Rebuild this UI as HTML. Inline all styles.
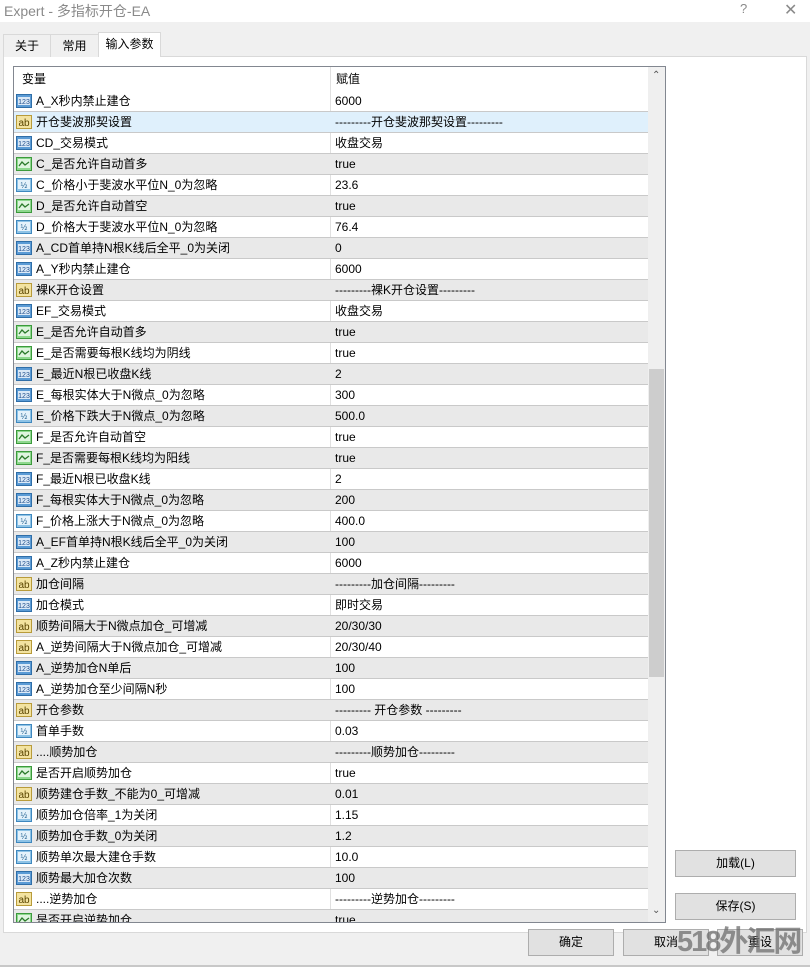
<!DOCTYPE html>
<html><head><meta charset="utf-8"><style>
*{margin:0;padding:0;box-sizing:border-box}
html,body{width:810px;height:967px;overflow:hidden}
body{background:#f0f0f0;font-family:"Liberation Sans","Noto Sans CJK SC",sans-serif;font-size:12px;color:#000;position:relative}
.abs{position:absolute}
.title{left:0;top:0;width:810px;height:22px;background:#fff}
.title span{position:absolute;left:4px;top:1px;font-size:14px;color:#8a8a8a}
.tab{position:absolute;top:34px;height:23px;border:1px solid #d9d9d9;border-bottom:none;background:#f0f0f0;text-align:center;line-height:22px}
.panel{left:3px;top:56px;width:804px;height:877px;background:#fff;border:1px solid #d9d9d9}
.list{left:13px;top:66px;width:653px;height:857px;border:1px solid #828790;background:#fff;overflow:hidden}
.hdr{position:absolute;left:0;top:0;width:634px;height:24px;background:#fff}
.hdr span{position:absolute;top:0;line-height:24px}
.row{position:absolute;left:0;width:634px;height:21px;border-bottom:1px solid #c9c9c9}
.row .n{position:absolute;left:22px;top:0;line-height:20px;white-space:nowrap}
.row .v{position:absolute;left:321px;top:0;line-height:20px;white-space:nowrap}
.row svg{position:absolute;left:2px;top:2px}
.g{background:#e9e9e9}.s{background:#dff0fc}
.col{position:absolute;left:316px;top:0;width:1px;height:857px;background:#e0e0e0}
.sb{position:absolute;left:634px;top:0;width:17px;height:855px;background:#efefef}
.thumb{position:absolute;left:1px;top:302px;width:15px;height:308px;background:#cdcdcd}
.btn{position:absolute;height:27px;border:1px solid #adadad;background:#e1e1e1;text-align:center;line-height:25px;font-size:12px}
</style></head><body>
<div class="abs title"><span>Expert - 多指标开仓-EA</span><span style="left:740px;font-size:13px">?</span><span style="left:784px;font-size:16px;top:0">✕</span></div>
<div class="abs panel"></div>
<div class="tab" style="left:3px;width:48px">关于</div>
<div class="tab" style="left:50px;width:49px">常用</div>
<div class="tab" style="left:98px;width:63px;top:32px;height:25px;background:#fff">输入参数</div>
<div class="abs list">
<div class="hdr"><span style="left:8px">变量</span><span style="left:322px">赋值</span></div>
<div class="col"></div>
<div id="rows"></div>
<div class="sb"><div style="position:absolute;left:4px;top:3px;font-size:10px;color:#555">&#8963;</div><div class="thumb"></div><div style="position:absolute;left:4px;top:838px;font-size:10px;color:#555">&#8964;</div></div>
</div>
<div class="btn" style="left:675px;top:850px;width:121px">加载(L)</div>
<div class="btn" style="left:675px;top:893px;width:121px">保存(S)</div>
<div class="btn" style="left:528px;top:929px;width:86px">确定</div>
<div class="btn" style="left:623px;top:929px;width:86px">取消</div>
<div class="btn" style="left:717px;top:929px;width:86px">重设</div>
<div class="abs" style="left:677px;top:922px;font-size:29px;line-height:40px;font-weight:bold;color:rgba(110,110,110,.75);letter-spacing:-2px;white-space:nowrap">518外汇网</div>
<div class="abs" style="left:0;top:965px;width:810px;height:2px;background:#c8c8c8"></div>
<script>
var I={
n:'<svg width="17" height="16"><rect x="0.5" y="1.5" width="15" height="13" fill="#5b9bd5" stroke="#2f6ea8"/><rect x="2" y="4" width="12" height="8" fill="#dbe9f7"/><text x="8" y="11" font-size="7" text-anchor="middle" fill="#1f4e8c" font-family="Liberation Sans">123</text></svg>',
a:'<svg width="17" height="16"><rect x="0.5" y="1.5" width="15" height="13" fill="#f3e3a0" stroke="#b89b3a"/><text x="8" y="12" font-size="10" text-anchor="middle" fill="#5a4500" font-family="Liberation Sans">ab</text></svg>',
c:'<svg width="17" height="16"><rect x="0.5" y="1.5" width="15" height="13" fill="#8ed88e" stroke="#3c9a3c"/><rect x="2" y="3" width="12" height="9" fill="#dff5df"/><path d="M3 10l3-4 3 3 4-3" stroke="#2a7a2a" fill="none" stroke-width="1.3"/></svg>',
v:'<svg width="17" height="16"><rect x="0.5" y="1.5" width="15" height="13" fill="#8ec3e6" stroke="#3f88bf"/><rect x="2" y="3" width="12" height="9" fill="#e5f2fb"/><text x="8" y="11" font-size="8" text-anchor="middle" fill="#1f5f8f" font-family="Liberation Sans">½</text></svg>'};
var D=[
['n','A_X秒内禁止建仓','6000'],['a','开仓斐波那契设置','---------开仓斐波那契设置---------'],['n','CD_交易模式','收盘交易'],['c','C_是否允许自动首多','true'],['v','C_价格小于斐波水平位N_0为忽略','23.6'],['c','D_是否允许自动首空','true'],['v','D_价格大于斐波水平位N_0为忽略','76.4'],['n','A_CD首单持N根K线后全平_0为关闭','0'],['n','A_Y秒内禁止建仓','6000'],['a','裸K开仓设置','---------裸K开仓设置---------'],['n','EF_交易模式','收盘交易'],['c','E_是否允许自动首多','true'],['c','E_是否需要每根K线均为阴线','true'],['n','E_最近N根已收盘K线','2'],['n','E_每根实体大于N微点_0为忽略','300'],['v','E_价格下跌大于N微点_0为忽略','500.0'],['c','F_是否允许自动首空','true'],['c','F_是否需要每根K线均为阳线','true'],['n','F_最近N根已收盘K线','2'],['n','F_每根实体大于N微点_0为忽略','200'],['v','F_价格上涨大于N微点_0为忽略','400.0'],['n','A_EF首单持N根K线后全平_0为关闭','100'],['n','A_Z秒内禁止建仓','6000'],['a','加仓间隔','---------加仓间隔---------'],['n','加仓模式','即时交易'],['a','顺势间隔大于N微点加仓_可增减','20/30/30'],['a','A_逆势间隔大于N微点加仓_可增减','20/30/40'],['n','A_逆势加仓N单后','100'],['n','A_逆势加仓至少间隔N秒','100'],['a','开仓参数','--------- 开仓参数 ---------'],['v','首单手数','0.03'],['a','....顺势加仓','---------顺势加仓---------'],['c','是否开启顺势加仓','true'],['a','顺势建仓手数_不能为0_可增减','0.01'],['v','顺势加仓倍率_1为关闭','1.15'],['v','顺势加仓手数_0为关闭','1.2'],['v','顺势单次最大建仓手数','10.0'],['n','顺势最大加仓次数','100'],['a','....逆势加仓','---------逆势加仓---------'],['c','是否开启逆势加仓','true']];
var h='';D.forEach(function(d,i){var cl=i==1?'s':(i%2?'g':'');h+='<div class="row '+cl+'" style="top:'+(24+i*21)+'px">'+I[d[0]]+'<span class="n">'+d[1]+'</span><span class="v">'+d[2]+'</span></div>';});
document.getElementById('rows').innerHTML=h;
</script>
</body></html>
